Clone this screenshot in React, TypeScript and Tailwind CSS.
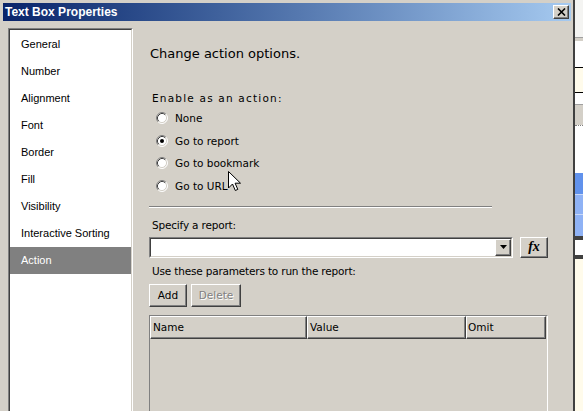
import React from 'react';

function Radio({ checked }: { checked?: boolean }) {
  return (
    <svg width="12" height="12" viewBox="0 0 12 12" className="shrink-0">
      <circle cx="6" cy="6" r="5" fill="#fff" />
      <path d="M2.11 9.89 A5.5 5.5 0 0 1 9.89 2.11" fill="none" stroke="#808080" strokeWidth="1" />
      <path d="M9.89 2.11 A5.5 5.5 0 0 1 2.11 9.89" fill="none" stroke="#ffffff" strokeWidth="1" />
      <path d="M2.82 9.18 A4.5 4.5 0 0 1 9.18 2.82" fill="none" stroke="#404040" strokeWidth="1" />
      <path d="M9.18 2.82 A4.5 4.5 0 0 1 2.82 9.18" fill="none" stroke="#d4d0c8" strokeWidth="1" />
      {checked && <circle cx="6" cy="6" r="2" fill="#000" />}
    </svg>
  );
}

const raised =
  'border border-t-white border-l-white border-r-[#404040] border-b-[#404040] shadow-[inset_-1px_-1px_0_#808080] bg-[#d4d0c8]';

function CloseBtn() {
  return (
    <div className={`flex h-[14px] w-[16px] items-center justify-center ${raised}`}>
      <svg width="9" height="8" viewBox="0 0 9 8">
        <path d="M1 0.5 L8 7.5 M8 0.5 L1 7.5" stroke="#000" strokeWidth="1.6" />
      </svg>
    </div>
  );
}

function Cursor() {
  return (
    <svg
      width="14"
      height="21"
      viewBox="0 0 14 21"
      className="pointer-events-none absolute left-[227.5px] top-[170.5px]"
    >
      <path
        d="M0.5 0.5 L0.5 17 L4.5 13 L7.3 19.5 L9.8 18.4 L7.1 12.2 L12.5 12.2 Z"
        fill="#fff"
        stroke="#000"
        strokeWidth="1"
        strokeLinejoin="miter"
      />
    </svg>
  );
}

function Strip() {
  return (
    <div className="flex h-full w-[8px] shrink-0 flex-col">
      <div className="h-[37px] bg-[#f4f4f2]" />
      <div className="h-[1px] bg-[#a0a0a0]" />
      <div className="h-[3px] bg-[#d4d0c8]" />
      <div className="h-[26px] bg-white" />
      <div className="h-[1px] bg-black" />
      <div className="h-[24px] bg-[#fffbeb]" />
      <div className="h-[1px] bg-black" />
      <div className="h-[11px] bg-white" />
      <div className="h-[1px] bg-[#a0a0a0]" />
      <div className="h-[20px] bg-[#d4d0c8]" />
      <div className="h-[1px] border-t border-dotted border-t-[#808080] bg-white" />
      <div className="h-[47px] bg-white" />
      <div className="h-[21px] bg-[#6192ec]" />
      <div className="h-[1px] bg-[#c8d8f8]" />
      <div className="h-[19px] bg-[#8fb2f5]" />
      <div className="h-[1px] bg-[#c8d8f8]" />
      <div className="h-[21px] bg-[#8fb2f5]" />
      <div className="h-[4px] bg-[#404040]" />
      <div className="h-[15px] bg-white" />
      <div className="h-[4px] bg-[#404040]" />
      <div className="flex-1 bg-[#fffbeb]" />
    </div>
  );
}

export default function App() {
  const items = [
    'General',
    'Number',
    'Alignment',
    'Font',
    'Border',
    'Fill',
    'Visibility',
    'Interactive Sorting',
    'Action',
  ];
  const radios = [
    { label: 'None' },
    { label: 'Go to report', checked: true },
    { label: 'Go to bookmark' },
    { label: 'Go to URL' },
  ];
  return (
    <div className="relative flex h-[411px] w-[583px] overflow-hidden bg-[#d4d0c8]">
      <div className="flex h-full w-[575px] shrink-0 flex-col border-r-2 border-r-[#404040] bg-[#d4d0c8]">
        <div className="pl-[3px] pr-[2px] pt-[3px]">
          <div className="flex h-[18px] items-center justify-between bg-linear-to-r from-[#0a246a] to-[#a6caf0] pl-[2px] pr-[2px]">
            <span className="font-['Liberation_Sans',Arial,sans-serif] text-[12px] font-bold leading-none text-white">
              Text Box Properties
            </span>
            <CloseBtn />
          </div>
        </div>

        <div className="flex flex-1 items-start pl-[8px] pt-[7px]">
          {/* left list */}
          <div className="h-[400px] w-[125px] shrink-0 border border-t-[#808080] border-l-[#808080] border-r-white border-b-white">
            <div className="h-full border border-t-[#404040] border-l-[#404040] border-r-[#d4d0c8] border-b-[#d4d0c8] bg-white pt-[1px] font-['Liberation_Sans',Arial,sans-serif] text-[11px]">
              {items.map((it) => (
                <div
                  key={it}
                  className={`flex h-[27px] items-center pl-[11px] ${
                    it === 'Action' ? 'bg-[#808080] text-white' : 'text-black'
                  }`}
                >
                  {it}
                </div>
              ))}
            </div>
          </div>

          {/* right content */}
          <div className="ml-[16px] flex w-[399px] shrink-0 flex-col font-['DejaVu_Sans',Verdana,sans-serif] text-[10.5px] text-black">
            <div className="ml-[1px] mt-[17px] h-[18px] text-[13px] leading-[18px]">Change action options.</div>
            <div className="ml-[3px] mt-[28px] h-[14px] leading-[14px] tracking-[1.2px]">Enable as an action:</div>
            <div className="mt-[1.6px] flex flex-col">
              {radios.map((r) => (
                <div key={r.label} className="ml-[7px] flex h-[22.7px] items-center gap-[7px]">
                  <Radio checked={r.checked} />
                  <span className="leading-[14px]">{r.label}</span>
                </div>
              ))}
            </div>
            <div className="mt-[8.6px] h-[2px] w-[343px] border-t border-b border-t-[#808080] border-b-white" />
            <div className="ml-[3px] mt-[10px] h-[14px] leading-[14px] tracking-[-0.18px]">Specify a report:</div>
            <div className="mt-[5px] flex gap-[7px]">
              <div className="h-[21px] w-[364px] border border-t-[#808080] border-l-[#808080] border-r-white border-b-white">
                <div className="flex h-full justify-end border border-t-[#404040] border-l-[#404040] border-r-[#d4d0c8] border-b-[#d4d0c8] bg-white">
                  <div className={`flex h-full w-[16px] items-center justify-center ${raised}`}>
                    <svg width="7" height="4" viewBox="0 0 7 4">
                      <path d="M0 0 L7 0 L3.5 4 Z" fill="#000" />
                    </svg>
                  </div>
                </div>
              </div>
              <div
                className={`flex h-[21px] w-[28px] items-center justify-center font-['Liberation_Serif',serif] text-[14px] font-bold italic leading-none ${raised}`}
              >
                fx
              </div>
            </div>
            <div className="ml-[3px] mt-[6px] h-[14px] leading-[14px] tracking-[-0.18px]">
              Use these parameters to run the report:
            </div>
            <div className="mt-[6px] flex gap-[4px]">
              <div className={`flex h-[23px] w-[38px] items-center justify-center ${raised}`}>Add</div>
              <div
                className={`flex h-[23px] w-[50px] items-center justify-center text-[#808080] [text-shadow:1px_1px_0_#fff] ${raised}`}
              >
                Delete
              </div>
            </div>
            <div className="mt-[8px] h-[130px] w-[399px] border border-t-[#808080] border-l-[#808080] border-r-white border-b-white bg-[#d4d0c8]">
              <div className="flex h-[23px]">
                <div className={`flex h-full w-[157px] items-center pl-[2px] ${raised}`}>Name</div>
                <div className={`flex h-full w-[159px] items-center pl-[2px] ${raised}`}>Value</div>
                <div className={`flex h-full w-[80px] items-center pl-[1px] ${raised}`}>Omit</div>
              </div>
            </div>
          </div>
        </div>
      </div>
      <Strip />
      <Cursor />
    </div>
  );
}
